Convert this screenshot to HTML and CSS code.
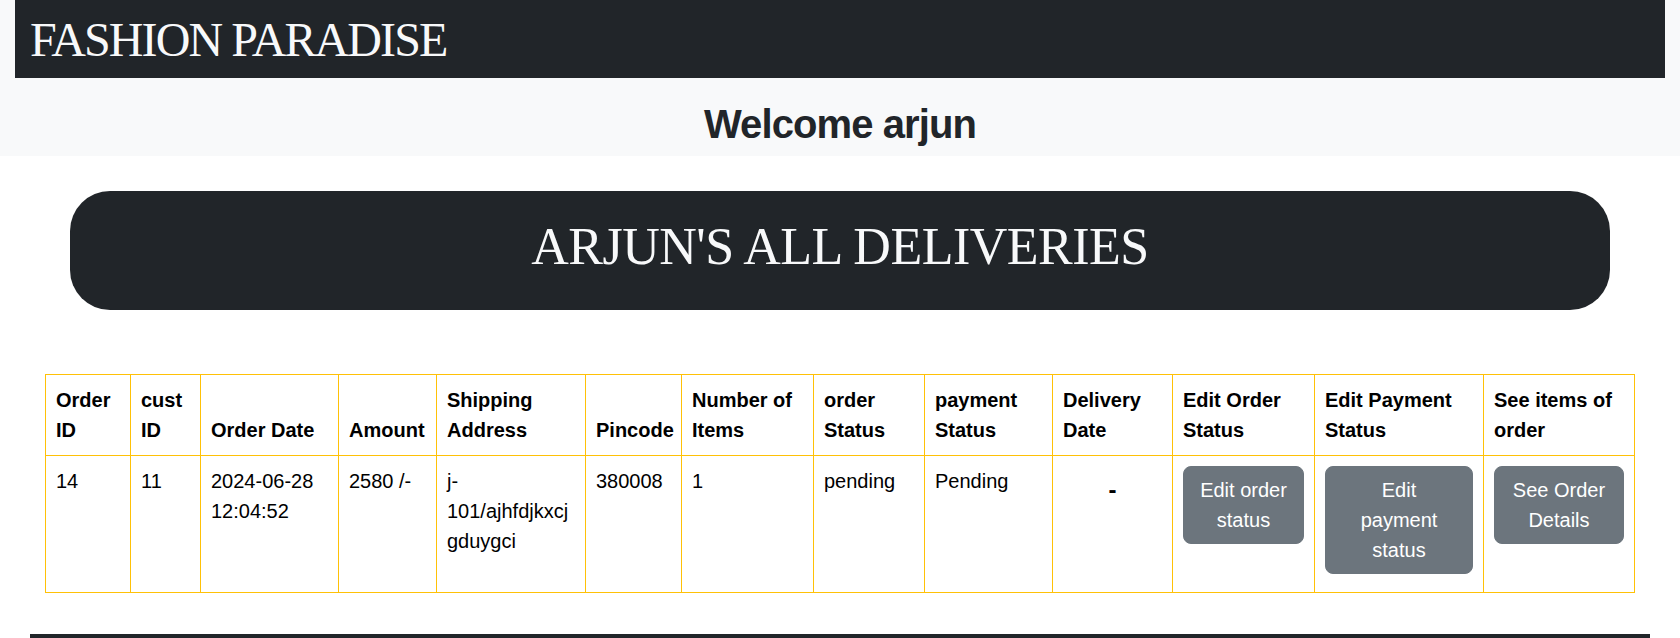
FILE: index.html
```html
<!DOCTYPE html>
<html lang="en">
<head>
<meta charset="utf-8">
<title>Fashion Paradise</title>
<link rel="stylesheet" href="styles.css">
</head>
<body>
<header class="top">
  <nav class="navbar"><span class="brand">FASHION PARADISE</span></nav>
  <h1 class="welcome">Welcome arjun</h1>
</header>
<main class="content">
  <div class="banner"><h1 class="banner-title">ARJUN'S ALL DELIVERIES</h1></div>
  <div class="table-wrap">
    <table class="orders">
      <colgroup>
        <col class="w-oid"><col class="w-cid"><col class="w-date"><col class="w-amt"><col class="w-addr"><col class="w-pin"><col class="w-num"><col class="w-ost"><col class="w-pst"><col class="w-del"><col class="w-eo"><col class="w-ep"><col class="w-see">
      </colgroup>
      <thead>
        <tr>
          <th>Order ID</th>
          <th>cust ID</th>
          <th>Order Date</th>
          <th>Amount</th>
          <th>Shipping Address</th>
          <th>Pincode</th>
          <th>Number of Items</th>
          <th>order Status</th>
          <th>payment Status</th>
          <th>Delivery Date</th>
          <th>Edit Order Status</th>
          <th>Edit Payment Status</th>
          <th>See items of order</th>
        </tr>
      </thead>
      <tbody>
        <tr>
          <td>14</td>
          <td>11</td>
          <td>2024-06-28 12:04:52</td>
          <td>2580 /-</td>
          <td>j-101/ajhfdjkxcj<wbr>gduygci</td>
          <td>380008</td>
          <td>1</td>
          <td>pending</td>
          <td>Pending</td>
          <td class="center"><span class="dash">-</span></td>
          <td><button type="button" class="btn">Edit order status</button></td>
          <td><button type="button" class="btn">Edit payment status</button></td>
          <td><button type="button" class="btn">See Order Details</button></td>
        </tr>
      </tbody>
    </table>
  </div>
</main>
<footer class="footer"></footer>
</body>
</html>
```

FILE: styles.css
```css
* {
  box-sizing: border-box;
}

html {
  overflow: hidden;
}

body {
  margin: 0;
  font-family: "Liberation Sans", Arial, sans-serif;
  color: #212529;
  background: #fff;
}

.top {
  background: #f8f9fa;
  padding: 0 15px;
  height: 156px;
}

.navbar {
  background: #212529;
  height: 78px;
  padding: 12px 15px 10px;
}

.brand {
  display: block;
  font-family: "Liberation Serif", "Times New Roman", serif;
  font-size: 48px;
  line-height: 56px;
  letter-spacing: -1.9px;
  color: #f8f9fa;
}

.welcome {
  margin: 0;
  padding-top: 22px;
  text-align: center;
  font-size: 40px;
  line-height: 48px;
  font-weight: 700;
  letter-spacing: -0.9px;
  color: #212529;
}

.banner {
  margin: 35px 70px 0;
  height: 119px;
  padding-top: 25px;
  background: #212529;
  border-radius: 40px;
  text-align: center;
}

.banner-title {
  margin: 0;
  font-family: "Liberation Serif", "Times New Roman", serif;
  font-weight: 400;
  font-size: 52px;
  line-height: 62px;
  letter-spacing: -0.5px;
  color: #f8f9fa;
}

.table-wrap {
  margin-top: 64px;
  padding: 0 45px;
}

.orders {
  width: 1590px;
  border-collapse: collapse;
  table-layout: fixed;
  color: #000;
  font-size: 20px;
  line-height: 30px;
}

.orders th,
.orders td {
  border: 1px solid #ffc107;
  padding: 10px;
  text-align: left;
}

.orders thead th {
  vertical-align: bottom;
  font-weight: 700;
}

.orders tbody td {
  vertical-align: top;
}

.orders td.center {
  text-align: center;
}

.dash {
  display: block;
  padding-top: 9px;
  font-size: 24px;
  font-weight: 700;
  line-height: 30px;
}

.w-oid { width: 85px; }
.w-cid { width: 70px; }
.w-date { width: 138px; }
.w-amt { width: 98px; }
.w-addr { width: 149px; }
.w-pin { width: 96px; }
.w-num { width: 132px; }
.w-ost { width: 111px; }
.w-pst { width: 128px; }
.w-del { width: 120px; }
.w-eo { width: 142px; }
.w-ep { width: 169px; }
.w-see { width: 151px; }

.btn {
  display: inline-block;
  vertical-align: top;
  margin: 0 0 8px;
  padding: 8px 16px;
  font-family: inherit;
  font-size: 20px;
  line-height: 30px;
  color: #fff;
  background: #6c757d;
  border: 1px solid #6c757d;
  border-radius: 8px;
  text-align: center;
  cursor: pointer;
}

.footer {
  margin: 41px 30px 0;
  height: 6px;
  background: #212529;
}
```
